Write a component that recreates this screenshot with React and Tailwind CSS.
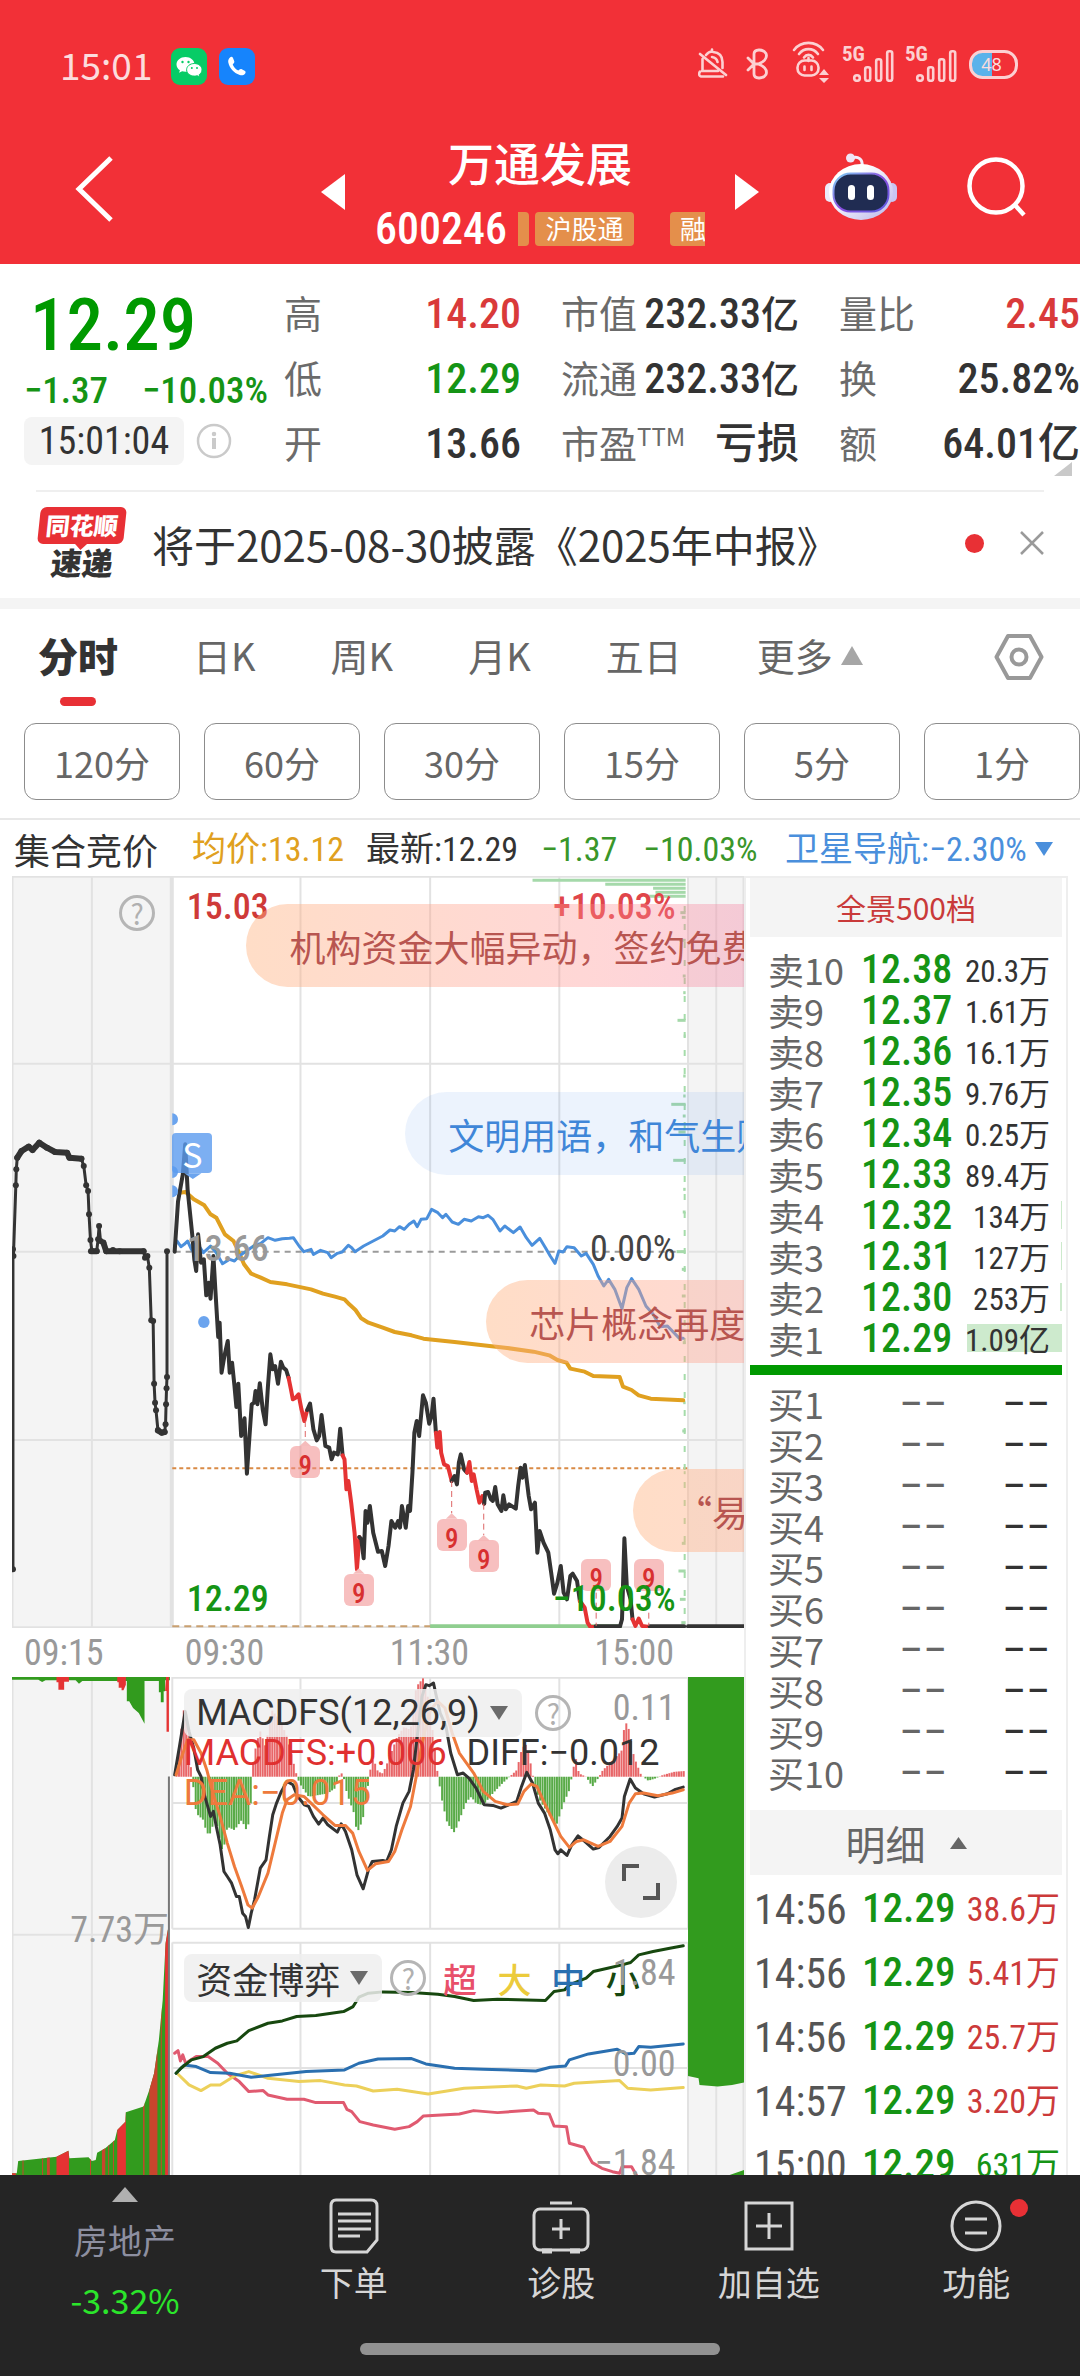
import React from 'react';

const NUM = "font-['Roboto_Condensed','Roboto','Noto_Sans_CJK_SC',sans-serif]";

/* ---------- chart data ---------- */

const priceSegments = [
  ['k', '365,37 372,-113 382,-195 387,-285 392,-150 397,-80 402,-10 406,60 410,95 414,-15 420,70 426,60 431,168 436,130 440,178 446,50 450,150 456,293 459,250 463,400 469,350 476,305 480,400 485,370 490,440 494,503 498,433 504,590 511,537 516,703 526,495 531,490 534,455 538,495 543,432 549,510 555,555 560,440 565,345 570,390 575,380 581,433 587,367 592,385 598,392 603,415'],
  ['r', '603,415 608,450 612,480 618,475 624,465 630,510 636,545 642,512'],
  ['k', '642,512 648,493 655,570 662,603 667,590 672,527 680,620 688,625 693,660 698,640 706,645 711,568 716,648'],
  ['r', '716,648 720,660 724,750 728,725 734,790 741,880 746,990 751,893'],
  ['k', '751,893 755,900 760,957 764,815 768,850 773,800 780,880 790,937 798,935 805,980 812,920 818,845 826,865 832,845 836,865 840,800 848,865 853,800 857,815 862,700 866,580 871,545 876,590 884,468 890,490 897,553 902,530 906,478 911,580'],
  ['r', '911,580 914,625 919,578 922,640 928,675 936,680 944,725'],
  ['k', '944,725 950,710 955,735 959,670 963,645 970,690 976,700'],
  ['r', '976,700 981,668 986,725 990,705 996,750 1002,790 1008,770 1012,793'],
  ['k', '1012,793 1014,760 1020,758 1026,780 1030,785 1035,743 1040,795 1048,815 1052,768 1057,810 1064,795 1078,808 1083,740 1088,685 1092,715 1097,677 1105,770 1110,810 1118,790 1123,940 1128,875 1136,910 1146,940 1152,1000 1158,1063 1165,1030 1172,980 1178,1060 1185,1080 1192,1010 1197,1003 1206,1025 1212,1085'],
  ['r', '1212,1085 1222,1105 1228,1150 1234,1163 1245,1163'],
  ['k', '1245,1161 1296,1161 1300,1140 1305,897 1310,1040 1318,1080 1322,1140'],
  ['r', '1322,1140 1328,1160 1335,1138 1342,1160 1358,1163'],
  ['k', '1358,1161 1430,1161'],
  ['k', '1438,1161 1555,1161'],
];

const averageLine =
  '375,-140 388,-142 405,-120 427,-102 440,-75 452,-65 470,-15 488,5 498,35 510,75 525,103 545,115 565,128 600,135 650,150 675,163 700,172 720,180 730,195 743,212 755,237 770,250 800,265 825,278 860,288 885,298 950,308 1000,316 1060,326 1115,337 1148,348 1165,362 1184,370 1192,388 1222,397 1240,410 1295,413 1302,442 1320,452 1335,468 1360,478 1428,483';

const sectorLine =
  '365,20 370,5 378,22 385,15 392,5 400,30 410,50 418,25 425,40 440,20 452,40 465,73 480,60 490,65 500,50 515,35 530,20 545,12 560,-5 575,3 590,-2 605,-3 613,-5 625,20 635,37 650,30 655,45 670,33 685,40 692,55 705,42 715,38 728,18 735,25 742,37 760,20 780,5 800,-10 815,-28 825,-25 835,-38 845,-30 855,-45 865,-55 872,-38 880,-60 892,-62 902,-90 915,-80 925,-65 932,-75 945,-52 958,-45 970,-60 985,-55 1000,-68 1010,-65 1020,-72 1030,-60 1045,-25 1055,-40 1073,-20 1087,-37 1100,-5 1112,18 1128,-3 1140,25 1150,50 1160,72 1168,35 1177,38 1185,22 1200,25 1215,50 1225,42 1240,75 1250,110 1262,140 1272,120 1285,150 1300,208 1310,145 1320,118 1335,150 1350,200 1365,225 1380,262 1395,260 1420,297 1428,297';

const auctionLine =
  '27,990 27,30 28,50 33,-162 34,-210 36,-245 45,-265 60,-278 68,-268 82,-290 98,-275 115,-262 140,-260 145,-245 170,-242 175,-220 180,-162 184,-145 186,-75 189,2 192,35 202,35 205,0 207,-40 210,5 216,10 222,36 236,32 250,36 300,36 303,55 308,50 312,85 316,243 320,245 322,433 324,490 326,513 330,572 338,580 344,578 346,555 347,495 348,447 349,413 349,36';
const auctionThick = [
  '36,-245 45,-265 60,-278 68,-268 82,-290 98,-275 115,-262 140,-260 145,-245 170,-242',
  '190,36 202,36',
  '216,10 222,36 300,36',
  '330,574 338,580 344,578',
];

const orderBars = [
  [1113, -1077], [1265, -1065], [1365, -1053], [1370, -1041], [1350, -1029], [1422, -980], [1425, -966], [1420, -897],
  [1427, -790], [1428, -740], [1416, -657], [1429, -610], [1428, -490], [1428, -430], [1403, -405], [1427, -370],
  [1418, -322], [1407, -237], [1428, -150], [1427, -82], [1414, 37], [1425, 90], [1425, 170], [1427, 310], [1428, 490],
  [1426, 575], [1429, 700], [1425, 912], [1418, 995], [1421, 1080], [1424, 1150],
];

const histogram = [
  [368, 20], [375, 100], [385, 210], [392, 170], [398, 40], [402, -5], [410, -110], [425, -130], [432, -170], [440, -170],
  [450, -120], [460, -190], [466, -230], [475, -150], [490, -160], [505, -130], [515, -160], [522, -130], [527, -5],
  [530, 60], [543, 140], [555, 90], [568, 200], [585, 170], [600, 120], [612, 50], [620, 5], [626, -20], [645, -60],
  [665, -55], [685, -50], [700, -35], [708, 0], [712, 15], [718, 0], [725, -50], [740, -110], [746, -170], [758, -130],
  [768, -40], [772, 10], [780, 55], [790, 15], [800, 10], [812, 50], [830, 120], [845, 150], [858, 140], [870, 270],
  [884, 295], [893, 250], [905, 130], [915, 5], [925, -80], [935, -140], [950, -168], [960, -130], [975, -75], [985, -60],
  [995, -80], [1010, -85], [1030, -50], [1050, -20], [1065, 0], [1080, 20], [1090, 80], [1098, 100], [1105, 70],
  [1113, 10], [1120, -40], [1130, -75], [1150, -120], [1163, -145], [1178, -80], [1190, -40], [1195, 0], [1203, 60],
  [1210, 10], [1225, 0], [1238, -30], [1250, -5], [1260, 20], [1285, 55], [1300, 80], [1306, 170], [1315, 140],
  [1325, 60], [1340, 5], [1355, -12], [1370, -5], [1385, 5], [1410, 15], [1430, 17],
];

function histogramBars() {
  const bars = [];
  let i = 0;
  for (let x = 369; x < 1430; x += 5) {
    while (histogram[i + 1][0] < x) i += 1;
    const [x0, v0] = histogram[i];
    const [x1, v1] = histogram[i + 1];
    bars.push([x, v0 + ((v1 - v0) * (x - x0)) / (x1 - x0)]);
  }
  return bars;
}

const diffLine =
  '365,345 375,260 387,155 395,215 405,265 413,330 420,350 428,410 440,470 446,455 452,500 460,555 468,635 475,650 484,670 494,710 500,710 507,760 513,770 519,803 525,760 532,720 544,625 556,600 563,530 570,465 578,430 588,395 600,365 612,375 622,410 636,435 645,440 655,470 666,493 675,475 685,495 705,517 713,492 722,515 735,570 746,645 759,687 770,630 778,605 800,602 808,605 818,570 828,500 842,430 855,395 864,330 872,230 882,110 890,75 897,78 906,70 912,110 920,160 932,200 942,280 956,345 968,340 980,355 995,385 1012,435 1030,437 1047,445 1080,425 1090,380 1101,338 1113,370 1125,430 1138,460 1150,510 1160,570 1166,582 1172,570 1185,587 1195,555 1208,528 1222,545 1240,568 1252,563 1275,530 1290,500 1300,475 1305,410 1317,358 1328,385 1345,402 1368,412 1395,402 1410,390 1428,382';
const deaLine =
  '368,345 380,290 392,240 405,240 420,280 432,330 445,400 460,470 475,550 490,620 505,680 518,735 527,745 540,710 560,640 575,550 590,460 600,420 615,405 635,410 650,430 675,465 700,497 722,497 737,520 750,575 768,632 785,612 812,605 825,575 840,510 858,440 870,350 885,230 900,150 915,125 930,145 945,220 960,280 990,340 1010,395 1035,425 1060,435 1082,433 1095,395 1110,373 1122,380 1138,430 1155,480 1172,530 1190,563 1205,545 1220,540 1250,560 1275,545 1300,500 1315,430 1328,402 1345,400 1375,408 1405,400 1428,390';

const fundLines = [
  ['#e05a70', '365,1180 372,1172 377,1203 382,1185 388,1210 410,1190 435,1190 455,1210 475,1240 500,1265 520,1295 550,1292 560,1305 600,1318 635,1318 660,1328 718,1328 725,1348 735,1355 752,1385 780,1395 825,1408 855,1400 872,1385 885,1368 960,1362 990,1352 1040,1358 1115,1350 1125,1360 1148,1362 1158,1398 1184,1400 1190,1450 1220,1462 1238,1508 1258,1525 1280,1535 1295,1540 1300,1520 1320,1520 1330,1545'],
  ['#ecd05a', '370,1240 395,1275 420,1292 440,1275 460,1275 490,1248 520,1235 560,1255 625,1265 670,1262 720,1275 745,1278 780,1293 830,1288 895,1302 970,1285 1080,1278 1100,1285 1130,1275 1180,1278 1200,1270 1295,1262 1312,1285 1360,1290 1428,1283'],
  ['#2a6fb0', '368,1240 385,1215 410,1220 440,1238 480,1240 525,1252 560,1247 640,1235 720,1230 750,1210 790,1197 860,1196 890,1212 950,1225 1010,1228 1120,1233 1150,1222 1182,1218 1190,1200 1230,1182 1290,1168 1308,1182 1325,1180 1335,1160 1360,1162 1428,1152'],
  ['#17480f', '368,1240 378,1225 400,1200 425,1190 450,1165 475,1150 495,1143 520,1112 560,1090 590,1083 620,1070 660,1067 718,1055 738,1040 750,1012 770,1000 800,996 860,998 915,1003 950,1010 990,1022 1040,1018 1140,1022 1158,995 1180,990 1190,975 1225,955 1240,935 1270,925 1300,915 1318,908 1335,885 1365,875 1400,865 1428,858'],
];

const sells = [
  ['10', '12.38', '20.3万', 'w-0'],
  ['9', '12.37', '1.61万', 'w-0'],
  ['8', '12.36', '16.1万', 'w-0'],
  ['7', '12.35', '9.76万', 'w-0'],
  ['6', '12.34', '0.25万', 'w-0'],
  ['5', '12.33', '89.4万', 'w-0'],
  ['4', '12.32', '134万', 'w-px'],
  ['3', '12.31', '127万', 'w-px'],
  ['2', '12.30', '253万', 'w-0.5'],
  ['1', '12.29', '1.09亿', 'w-[95px]'],
];
const buys = ['1', '2', '3', '4', '5', '6', '7', '8', '9', '10'];
const trades = [
  ['14:56', '38.6万', 'text-[#cc3a3a]'],
  ['14:56', '5.41万', 'text-[#cc3a3a]'],
  ['14:56', '25.7万', 'text-[#cc3a3a]'],
  ['14:57', '3.20万', 'text-[#cc3a3a]'],
  ['15:00', '631万', 'text-[#159415]'],
];

/* ---------- helpers ---------- */

const TOP = { x: 25, y: -1090, w: 1530, h: 2256 };
const LOW = { x: 25, y: 52, w: 1530, h: 1493 };

function Place({ box, x, y, right, className = '', children }) {
  const style = { top: `${((y - box.y) / box.h) * 100}%` };
  if (right) style.right = `${((box.x + box.w - x) / box.w) * 100}%`;
  else style.left = `${((x - box.x) / box.w) * 100}%`;
  return (
    <div className={`absolute whitespace-nowrap ${className}`} style={style}>
      {children}
    </div>
  );
}

function Line({ points, color, width = 3 }) {
  return (
    <polyline
      points={points}
      fill="none"
      stroke={color}
      strokeWidth={width}
      strokeLinejoin="round"
      strokeLinecap="round"
      vectorEffect="non-scaling-stroke"
    />
  );
}

function Rule({ d, color = '#e2e2e2', width = 2, dash }) {
  return <path d={d} fill="none" stroke={color} strokeWidth={width} strokeDasharray={dash} vectorEffect="non-scaling-stroke" />;
}

function Help({ label }) {
  return (
    <button aria-label={label} className="flex size-9 items-center justify-center rounded-full border-[3px] border-[#b5b5b5] text-[28px] leading-none text-[#b0b0b0]">
      ?
    </button>
  );
}

function Triangle({ className, down }) {
  return (
    <svg viewBox="0 0 20 16" className={className} preserveAspectRatio="none" aria-hidden="true">
      <path d={down ? 'M0 0H20L10 16Z' : 'M10 0L20 16H0Z'} fill="currentColor" />
    </svg>
  );
}

/* ---------- header ---------- */

function Signal() {
  return (
    <div className="relative h-9 w-[52px]">
      <span className={`${NUM} absolute -top-0.5 left-0 text-[21px] leading-[21px] font-bold text-[#fcd0d2]`}>5G</span>
      <svg viewBox="0 0 52 36" className="h-9 w-[52px]" aria-hidden="true">
        <g fill="none" stroke="#fcd0d2" strokeWidth="2.6">
          <circle cx="15" cy="32" r="2.8" />
          <rect x="23.2" y="21.2" width="5" height="13.6" rx="2" />
          <rect x="34.2" y="13.2" width="5" height="21.6" rx="2" />
          <rect x="45.2" y="5.2" width="5" height="29.6" rx="2" />
        </g>
      </svg>
    </div>
  );
}

function StatusBar() {
  return (
    <div className="flex h-[128px] items-center pr-[62px] pl-15 text-[#fcdcdd]">
      <span className="pt-0.5 text-[37px]">15:01</span>
      <svg viewBox="0 0 36 37" className="mt-1 ml-[19px] h-[37px] w-9" role="img" aria-label="微信">
        <rect width="36" height="37" rx="9" fill="#07cc66" />
        <path d="M14.500 9C9.500 9 5.500 12.300 5.500 16.400c0 2.400 1.300 4.400 3.400 5.800l-.8 2.600 3-1.500c1 .3 2.200.5 3.400.5 5 0 9-3.300 9-7.400S19.500 9 14.500 9Z" fill="#fff" />
        <path d="M23.300 15.500c4.300 0 7.700 2.800 7.700 6.300 0 2-1.100 3.700-2.800 4.900l.6 2.300-2.500-1.300c-1 .3-2 .4-3 .4-4.300 0-7.700-2.800-7.700-6.300s3.400-6.300 7.700-6.300Z" fill="#fff" stroke="#07cc66" />
        <g fill="#07cc66"><circle cx="11.500" cy="14" r="1.200" /><circle cx="17.500" cy="14" r="1.200" /><circle cx="20.800" cy="20" r="1" /><circle cx="26" cy="20" r="1" /></g>
      </svg>
      <svg viewBox="0 0 36 37" className="mt-1 ml-3 h-[37px] w-9" role="img" aria-label="电话">
        <rect width="36" height="37" rx="9" fill="#1684fc" />
        <path d="M11 9.500c1-1 2.500-.8 3 .5l1.200 3c.3.900.1 1.600-.5 2.300l-1 1.100c1 2.600 2.900 4.700 5.600 6l1.200-.9c.7-.6 1.500-.7 2.300-.3l2.800 1.500c1.200.6 1.300 2 .4 3-1.300 1.500-3.200 2-5.200 1.300C14.500 25 10.500 20 9.300 14.500c-.4-2 .3-3.700 1.700-5Z" fill="#fff" />
      </svg>
      <div className="ml-auto flex items-center">
        <svg viewBox="0 0 30 32" className="h-8 w-[30px]" fill="none" stroke="#fcd0d2" strokeWidth="2.600" strokeLinecap="round" strokeLinejoin="round" aria-hidden="true">
          <path d="M2 6L28 27M8 7c2-2.500 4-3.500 6-3.500V1.500M15 4c6 .5 9.500 4 9.500 10v6M4.500 11v11M4 23h16M2 23.500C.5 26 1 28 3 28.500h22M14 9c3 .4 5 2 5.500 5" />
        </svg>
        <svg viewBox="0 0 22 32" className="ml-[18px] h-8 w-[22px]" fill="none" stroke="#fcd0d2" strokeWidth="2.800" strokeLinecap="round" strokeLinejoin="round" aria-hidden="true">
          <path d="M2 10L8 16L2 22M8 16V6c0-5 9-5.500 12-.5c2 5-3 9-8 10.500H8M8 16v10c0 5 9 5.500 12 .5c2-5-3-9-8-10.500" />
        </svg>
        <svg viewBox="0 0 38 42" className="mr-3 mb-1 ml-6 h-[42px] w-[38px]" fill="none" stroke="#fcd0d2" strokeWidth="2.600" strokeLinecap="round" aria-hidden="true">
          <path d="M2 9C9-.5 24-.5 31 9M7 13c5-6.500 14-6.500 19 0M12 16.500c2.500-3.500 6.500-3.500 9 0M16.500 17v3" />
          <rect x="5.500" y="19.500" width="21" height="15" rx="7" />
          <path d="M12.500 25.500v3.500M19.500 25.500v3.500" />
          <path d="M32 28l5 6H27ZM27 37h10l-5 5Z" fill="#fcd0d2" stroke="none" />
        </svg>
        <Signal />
        <span className="w-[11px]" />
        <Signal />
        <div className="relative ml-3 h-[29px] w-[49px]">
          <svg viewBox="0 0 49 29" className="h-[29px] w-[49px]" aria-hidden="true">
            <path d="M14.500 1.500H23v26h-8.500a13 13 0 0 1 0-26Z" fill="#5bb2ea" />
            <rect x="1.500" y="1.500" width="46" height="26" rx="12" fill="none" stroke="#fcd0d2" strokeWidth="3" />
          </svg>
          <span className="absolute inset-x-0 top-0 pr-1 text-center font-['Noto_Sans',sans-serif] text-[18px] leading-[29px]">48</span>
        </div>
      </div>
    </div>
  );
}

function Header() {
  return (
    <header className="bg-[#f23037] text-white">
      <StatusBar />
      <div className="grid h-[136px] grid-cols-[1fr_438px_1fr] items-center">
        <button aria-label="返回" className="ml-[74px] w-10 pb-3.5">
          <svg viewBox="0 0 40 66" className="h-[66px] w-10" fill="none" stroke="#fff" strokeWidth="5">
            <path d="M37 2L5 33L37 64" />
          </svg>
        </button>
        <div className="flex items-center justify-between">
          <button aria-label="上一只" className="pb-2">
            <svg viewBox="0 0 24 36" className="h-9 w-6"><path d="M24 0V36L0 18Z" fill="#fff" /></svg>
          </button>
          <div className="w-[330px]">
            <h1 className="text-center text-[46px] leading-[66px] font-medium">万通发展</h1>
            <div className="flex h-[70px] items-center overflow-hidden">
              <span className={`${NUM} w-[143px] shrink-0 text-[44px] font-medium`}>600246</span>
              <span className="h-[34px] w-[11px] shrink-0 rounded-r bg-[#e48f4b]" />
              <span className="ml-1.5 h-[34px] w-[99px] shrink-0 rounded bg-[#e48f4b] text-center text-[26px] leading-[32px]">沪股通</span>
              <span className="ml-9 h-[34px] w-[60px] shrink-0 rounded bg-[#e48f4b] pl-2.5 text-[26px] leading-[32px]">融</span>
            </div>
          </div>
          <button aria-label="下一只" className="pb-2">
            <svg viewBox="0 0 24 36" className="h-9 w-6"><path d="M0 0V36L24 18Z" fill="#fff" /></svg>
          </button>
        </div>
        <div className="flex items-center justify-between pr-[52px] pb-4.5 pl-[65px]">
          <button aria-label="智能助手">
            <svg viewBox="0 0 74 68" className="h-[68px] w-[74px]">
              <defs>
                <linearGradient id="shell" x1="0" y1="0" x2="1" y2="1"><stop offset="0.3" stopColor="#ffffff" /><stop offset="1" stopColor="#b9b4ea" /></linearGradient>
                <linearGradient id="rim" x1="0" y1="0" x2="1" y2="1"><stop offset="0" stopColor="#7fd6f5" /><stop offset="0.5" stopColor="#8b4fe0" /><stop offset="1" stopColor="#5a5be0" /></linearGradient>
              </defs>
              <path d="M28 5c6-2 11 1 10 8" fill="none" stroke="#f3eefc" strokeWidth="3" />
              <circle cx="26.500" cy="5" r="4.500" fill="#efe6f6" />
              <rect x="1" y="30" width="10" height="19" rx="5" fill="#eceafa" />
              <rect x="63" y="30" width="10" height="19" rx="5" fill="#c9c6f2" />
              <ellipse cx="37" cy="39" rx="32" ry="28" fill="url(#shell)" />
              <rect x="9.500" y="20.500" width="55" height="38" rx="17" fill="#202c52" stroke="url(#rim)" strokeWidth="2" />
              <rect x="24" y="32" width="7" height="15" rx="3.500" fill="#fff" />
              <rect x="43" y="32" width="7" height="15" rx="3.500" fill="#fff" />
            </svg>
          </button>
          <button aria-label="搜索">
            <svg viewBox="0 0 62 62" className="size-[62px]" fill="none" stroke="#fff" strokeWidth="4.500">
              <circle cx="30" cy="30" r="26.500" /><path d="M48 48L58 59" />
            </svg>
          </button>
        </div>
      </div>
    </header>
  );
}

/* ---------- quote ---------- */

function Stat({ label, value, unit, color = 'text-[#333]' }) {
  return (
    <div className="flex h-[65px] items-center justify-between">
      <span className="pb-1 text-[38px] text-[#6b6b6b]">{label}</span>
      <span className={`${NUM} text-[42px] font-medium ${color}`}>
        {value}
        {unit && <span className="text-[38px]">{unit}</span>}
      </span>
    </div>
  );
}

function Quote() {
  return (
    <section className="relative flex pt-[17px] pb-3.5">
      <div className="w-[284px] shrink-0 pl-6">
        <div className={`${NUM} pl-1.5 text-[73px] leading-[88px] font-medium text-[#009900]`}>12.29</div>
        <div className={`${NUM} flex h-11 items-center justify-between pr-4 text-[37px] font-medium text-[#159415]`}>
          <span>−1.37</span>
          <span>−10.03%</span>
        </div>
        <div className="mt-1 flex items-center gap-3">
          <span className={`${NUM} h-12 w-40 rounded-lg bg-[#f4f4f4] text-center text-[38px] leading-[48px] text-[#333]`}>15:01:04</span>
          <button aria-label="说明">
            <svg viewBox="0 0 36 36" className="size-9" fill="none" stroke="#cacaca" strokeWidth="2.500">
              <circle cx="18" cy="18" r="16" /><path d="M18 15v11" strokeWidth="4" /><circle cx="18" cy="11" r="1" />
            </svg>
          </button>
        </div>
      </div>
      <div className="grid flex-1 grid-cols-[237fr_238fr_241fr] gap-x-10">
        <div>
          <Stat label="高" value="14.20" color="text-[#d93a3a]" />
          <Stat label="低" value="12.29" color="text-[#159415]" />
          <Stat label="开" value="13.66" />
        </div>
        <div>
          <Stat label="市值" value="232.33" unit="亿" />
          <Stat label="流通" value="232.33" unit="亿" />
          <Stat label={<>市盈<sup className="text-[24px]">TTM</sup></>} value="亏损" />
        </div>
        <div>
          <Stat label="量比" value="2.45" color="text-[#d93a3a]" />
          <Stat label="换" value="25.82%" />
          <Stat label="额" value="64.01亿" />
        </div>
      </div>
      <svg viewBox="0 0 18 14" className="absolute right-2 bottom-3.5 h-3.5 w-[18px]" aria-hidden="true"><path d="M18 0V14H0Z" fill="#c9c9c9" /></svg>
    </section>
  );
}

function News() {
  return (
    <section>
      <div className="mx-9 border-t-2 border-[#efefef]" />
      <div className="flex h-[106px] items-center pr-9 pb-1 pl-9">
        <div className="flex w-[92px] shrink-0 flex-col items-center">
          <span className="relative h-[37px] w-[86px] -skew-x-6 rounded-md bg-[#e83035] text-center text-[24px] leading-[36px] font-black text-white">
            同花顺
            <svg viewBox="0 0 16 8" className="absolute -bottom-1.5 left-9 h-2 w-4" aria-hidden="true"><path d="M0 0H16L8 8Z" fill="#e83035" /></svg>
          </span>
          <span className="-skew-x-6 text-[31px] leading-[36px] font-black text-[#333]">速递</span>
        </div>
        <a href="#news" className="ml-6 text-[42px] whitespace-nowrap text-[#333]">将于2025-08-30披露《2025年中报》</a>
        <span className="ml-auto size-[19px] rounded-full bg-[#e83035]" />
        <button aria-label="关闭" className="ml-9">
          <svg viewBox="0 0 24 24" className="size-6" stroke="#9a9a9a" strokeWidth="2.500"><path d="M1 1L23 23M23 1L1 23" /></svg>
        </button>
      </div>
      <div className="h-[11px] bg-[#f4f4f4]" />
    </section>
  );
}

function Tabs() {
  return (
    <section className="border-b-2 border-[#e8e8e8] pb-[18px]">
      <div className="flex h-[114px] items-start gap-[75px] pt-[18px] pr-9 pl-[38px] text-[38px] leading-[56px] text-[#666]">
        <button className="flex flex-col items-center text-[40px] font-black text-[#333]">
          分时
          <span className="mt-3.5 h-[9px] w-9 rounded-full bg-[#e83035]" />
        </button>
        <button>日K</button>
        <button>周K</button>
        <button>月K</button>
        <button>五日</button>
        <button className="flex items-center gap-2">
          更多
          <Triangle className="h-[19px] w-[22px] text-[#a6a6a6]" />
        </button>
        <button aria-label="设置" className="ml-auto self-start pt-1.5">
          <svg viewBox="0 0 50 48" className="h-12 w-[50px]" fill="none" stroke="#999" strokeWidth="4" strokeLinejoin="round">
            <path d="M14 3H36L47.500 24L36 45H14L2.500 24Z" /><circle cx="25" cy="24" r="7.500" />
          </svg>
        </button>
      </div>
      <div className="flex gap-6 pl-6">
        {['120分', '60分', '30分', '15分', '5分', '1分'].map((t) => (
          <button key={t} className="h-[77px] flex-1 rounded-xl border border-[#8c8c8c] text-[36px] text-[#666]">{t}</button>
        ))}
      </div>
    </section>
  );
}

function Legend() {
  return (
    <div className="flex h-14 items-center pt-0.5 pl-3.5 text-[34px] whitespace-nowrap">
      <span className="w-[178px] text-[36px] text-[#333]">集合竞价</span>
      <span className={`${NUM} w-[174px] text-[#e0a020]`}>均价:13.12</span>
      <span className={`${NUM} w-[175px] text-[#333]`}>最新:12.29</span>
      <span className={`${NUM} w-[102px] text-[#3a962a]`}>−1.37</span>
      <span className={`${NUM} w-[142px] text-[#3a962a]`}>−10.03%</span>
      <button className={`${NUM} flex items-center gap-2 text-[#4a8fdc]`}>
        卫星导航:−2.30%
        <Triangle down className="h-3.5 w-[18px]" />
      </button>
    </div>
  );
}

/* ---------- price chart ---------- */

function Flag({ x, y }) {
  return (
    <Place box={TOP} x={x} y={y} className={`${NUM} -ml-[15px] h-8 w-[30px] rounded-md bg-[#f08a8a]/55 text-center text-[27px] leading-[40px] font-medium text-[#d83030]`}>
      9
    </Place>
  );
}

function Bubble({ x, y, tone, children }) {
  return (
    <Place
      box={TOP}
      x={x}
      y={y}
      className={`h-[83px] rounded-l-full pl-[43px] text-[36px] leading-[84px] ${tone}`}
    >
      {children}
    </Place>
  );
}

const warm = 'w-[700px] bg-linear-to-r from-[#ffb482]/45 via-[#ff8c8c]/35 to-[#e664b4]/35 text-[#b85550]';

function PriceChart() {
  return (
    <div className="relative h-[752px] overflow-hidden">
      <svg viewBox="25 -1090 1530 2256" preserveAspectRatio="none" className="absolute inset-0 size-full" role="img" aria-label="分时走势">
        <rect x="25" y="-1090" width="333" height="2256" fill="#f4f4f4" />
        <rect x="1438" y="-1090" width="117" height="2256" fill="#f4f4f4" />
        <Rule d="M25 -1088H1555M25 -527H1555M25 37H360M1438 37H1555M25 602H1555M25 1164H1555" />
        <Rule d="M26 -1090V1166M192 -1090V1166M628 -1090V1166M899 -1090V1166M1169 -1090V1166M1438 -1090V1166M1497 -1090V1166M1554 -1090V1166" />
        <Rule d="M359 -1090V1166" width={4} />
        <Rule d="M365 37H1430" color="#9a9a9a" dash="6 5" />
        <Rule d="M360 687H1438" color="#d98a45" width={2} dash="4 3" />
        <Rule d="M360 1161H1250" color="#c9a070" width={2} dash="7 5" />
        <Rule d="M899 1161H1300" color="#8fce8f" width={4} />
        <Rule d="M1431 -1000V1160" color="#a5dcaa" width={2} dash="6 12" />
        {orderBars.map(([x, y]) => (
          <Rule key={y} d={`M${x} ${y}H1433`} color="#a5d9aa" width={3} />
        ))}
        <Line points={auctionLine} color="#333" width={3} />
        {auctionThick.map((p) => <Line key={p} points={p} color="#333" width={6} />)}
        {auctionLine.split(' ').map((p, i) => <Line key={i} points={`${p} ${p}`} color="#333" width={6} />)}
        <Line points={averageLine} color="#e0a020" width={4} />
        <Line points={sectorLine} color="#4a8fdc" width={3} />
        {priceSegments.map(([tone, p]) => (
          <Line key={p} points={p} color={tone === 'k' ? '#333333' : '#e53333'} width={4} />
        ))}
        <Rule d="M638 545V605M944 725V822M1011 793V887M1246 1060V1160M1356 1060V1160" color="#d66" width={1} dash="6 4" />
        <g fill="#f5bcbc">
          <path d="M626 620L638 604L650 620ZM738 1003L750 987L762 1003ZM932 838L944 822L956 838ZM999 903L1011 887L1023 903Z" />
        </g>
        <g fill="#6ba4ee">
          <path d="M360 -378a12 18 0 0 1 0 36ZM360 -220a12 18 0 0 1 0 36ZM360 -162a12 18 0 0 1 0 36Z" />
          <ellipse cx="426" cy="248" rx="12" ry="18" />
          <path d="M385 -198L403 -181L421 -198Z" />
        </g>
      </svg>
      <Place box={TOP} x={360} y={-319} className="size-10 rounded-sm bg-[#5b9bef]/80 text-center text-[34px] leading-[42px] text-white">S</Place>
      <Flag x={638} y={620} />
      <Flag x={750} y={1003} />
      <Flag x={944} y={838} />
      <Flag x={1011} y={903} />
      <Flag x={1246} y={960} />
      <Flag x={1356} y={960} />
      <div className={`${NUM} text-[36px] leading-10 font-medium`}>
        <Place box={TOP} x={390} y={-1056} className="text-[#cf3a38]">15.03</Place>
        <Place box={TOP} x={1412} y={-1056} right className="text-[#e0454a]">+10.03%</Place>
        <Place box={TOP} x={390} y={-32} className="text-[#999]">13.66</Place>
        <Place box={TOP} x={1412} y={-32} right className="font-normal text-[#444]">0.00%</Place>
        <Place box={TOP} x={390} y={1019} className="text-[#159415]">12.29</Place>
        <Place box={TOP} x={1412} y={1019} right className="text-[#159415]">−10.03%</Place>
      </div>
      <Place box={TOP} x={249} y={-1032}><Help label="集合竞价说明" /></Place>
      <Bubble x={515} y={-1005} tone={warm}>机构资金大幅异动，签约免费</Bubble>
      <Bubble x={847} y={-441} tone="w-[500px] bg-[#468cf0]/10 text-[#3f86d8]">文明用语，和气生财</Bubble>
      <Bubble x={1016} y={123} tone={warm}>芯片概念再度</Bubble>
      <Bubble x={1323} y={688} tone={warm}>“易中</Bubble>
    </div>
  );
}

/* ---------- indicator charts ---------- */

const auctionVolume =
  'M25 1545V1540H35L38 1503L90 1495L118 1490L143 1472L145 1495L185 1492L192 1503L200 1500L203 1478L220 1465L240 1440L245 1410L262 1385L263 1357L300 1340L312 1290L322 1240L332 1140L340 1020L346 850L352 800V1545Z';

function IndicatorCharts() {
  return (
    <div className="relative h-[498px] overflow-hidden">
      <svg viewBox="25 52 1530 1493" preserveAspectRatio="none" className="absolute inset-0 size-full" role="img" aria-label="指标">
        <defs><clipPath id="vol"><path d={auctionVolume} /></clipPath></defs>
        <rect x="25" y="52" width="330" height="1493" fill="#f4f4f4" />
        <rect x="1438" y="52" width="117" height="1493" fill="#f4f4f4" />
        <Rule d="M26 52V1545M192 52V1545M25 825H355M1497 52V1545M1554 52V1545" />
        <Rule d="M360 54H1438M360 430H1438M360 807H1438M360 849H1438M360 1224H1438" />
        <Rule d="M360 52V807M628 52V807M899 52V807M1169 52V807M1438 52V807M360 848V1545M628 848V1545M899 848V1545M1169 848V1545M1438 848V1545" />
        <path d={auctionVolume} fill="#329b1e" />
        <g clipPath="url(#vol)" fill="#e53333">
          <rect x="25" y="1500" width="8" height="60" />
          <rect x="118" y="700" width="26" height="860" />
          <rect x="245" y="700" width="18" height="860" />
          <rect x="345" y="700" width="8" height="860" />
          <g fill="#c8452d">
            <rect x="47" y="700" width="2" height="860" /><rect x="88" y="700" width="2" height="860" /><rect x="98" y="700" width="6" height="860" />
            <rect x="188" y="700" width="2" height="860" /><rect x="213" y="700" width="7" height="860" /><rect x="226" y="700" width="2" height="860" />
            <rect x="236" y="700" width="2" height="860" /><rect x="299" y="700" width="3" height="860" /><rect x="312" y="700" width="17" height="860" />
            <rect x="336" y="700" width="2" height="860" />
          </g>
        </g>
        <path d="M25 52H355V62H345V95H342V128H336V98H332V64H302V192L290 160L278 145L270 125H265V64H172L165 72L158 62H95L88 67L80 60H25Z" fill="#329b1e" />
        <path d="M118 52H144V66H134V90H122V68H118ZM245 52H263V75L258 92H254V84H248V68H245ZM347 52H353V216H348V94H345Z" fill="#e53333" />
        <Rule d="M353 350V1545" color="#777" />
        <path d="M1438 50H1555V1268L1530 1275L1500 1280L1462 1275L1460 1255L1438 1248ZM1525 1545L1555 1530V1545Z" fill="#329b1e" />
        {histogramBars().map(([x, v]) => (
          <Rule key={x} d={`M${x} 351V${351 - v}`} color={v > 0 ? '#e86668' : '#58aa47'} width={2} />
        ))}
        <Line points={diffLine} color="#333" width={3} />
        <Line points={deaLine} color="#ee7a3c" width={3} />
        {fundLines.map(([c, p]) => <Line key={c} points={p} color={c} width={3} />)}
      </svg>

      <Place box={LOW} x={385} y={87}>
        <button className="flex h-12 items-center gap-2.5 rounded-lg bg-[#efefef]/85 pr-3.5 pl-3 font-['Roboto',sans-serif] text-[36px] text-[#333]">
          MACDFS(12,26,9)
          <Triangle down className="h-3.5 w-[18px] text-[#6b6b6b]" />
        </button>
      </Place>
      <Place box={LOW} x={1119} y={106}><Help label="MACDFS 说明" /></Place>
      <div className="font-['Roboto',sans-serif] text-[36px] leading-10">
        <Place box={LOW} x={384} y={221} className="text-[#e03030]">MACDFS:+0.006</Place>
        <Place box={LOW} x={975} y={221} className="text-[#333]">DIFF:−0.012</Place>
        <Place box={LOW} x={384} y={340} className="text-[#ee7a3c]">DEA:−0.015</Place>
      </div>
      <Place box={LOW} x={385} y={882}>
        <button className="flex h-12 items-center gap-2.5 rounded-lg bg-[#efefef]/85 pr-3.5 pl-3 text-[36px] text-[#333]">
          资金博弈
          <Triangle down className="h-3.5 w-[18px] text-[#6b6b6b]" />
        </button>
      </Place>
      <Place box={LOW} x={816} y={900}><Help label="资金博弈说明" /></Place>
      <div className="text-[34px] leading-10 font-medium">
        <Place box={LOW} x={926} y={896} className="text-[#e8506a]">超</Place>
        <Place box={LOW} x={1040} y={896} className="text-[#eccb3c]">大</Place>
        <Place box={LOW} x={1152} y={896} className="text-[#2a6fb0]">中</Place>
        <Place box={LOW} x={1266} y={896} className="text-[#17480f]">小</Place>
      </div>
      <div className={`${NUM} text-[36px] leading-10 text-[#999]`}>
        <Place box={LOW} x={1412} y={84} right>0.11</Place>
        <Place box={LOW} x={1412} y={880} right>1.84</Place>
        <Place box={LOW} x={1412} y={1152} right>0.00</Place>
        <Place box={LOW} x={1412} y={1450} right>−1.84</Place>
        <Place box={LOW} x={353} y={750} right>7.73万</Place>
      </div>
      <Place box={LOW} x={1265} y={560}>
        <button aria-label="全屏" className="block size-18 rounded-full bg-[#ebebeb]/95">
          <svg viewBox="0 0 72 72" className="size-18" fill="none" stroke="#555" strokeWidth="4"><path d="M19 35V20H34M53 37V52H38" /></svg>
        </button>
      </Place>
    </div>
  );
}

/* ---------- order book ---------- */

function OrderBook() {
  return (
    <aside className="w-[324px] shrink-0 border-x-2 border-t-2 border-[#eeeeee] px-1">
      <button className="block h-[59px] w-full bg-[#f4f4f4] text-[30px] text-[#c93a3a]">全景500档</button>
      <table className="mt-3 w-full">
        <tbody>
          {sells.map(([n, price, vol, bar]) => (
            <tr key={n} className="h-[41px]">
              <th className="w-[111px] pl-[18px] text-left text-[36px] leading-[41px] font-normal text-[#666]">{`卖${n}`}</th>
              <td className={`${NUM} text-[40px] leading-[41px] font-medium text-[#159415]`}>{price}</td>
              <td className={`${NUM} relative pr-3 text-right text-[31px] leading-[41px] text-[#333]`}>
                <span className={`absolute top-1.5 right-0 h-7 bg-[#cdeacd] ${bar}`} />
                <span className="relative top-0.5">{vol}</span>
              </td>
            </tr>
          ))}
        </tbody>
      </table>
      <div className="mt-1.5 h-2.5 bg-[#009900]" />
      <table className="mt-2 w-full">
        <tbody>
          {buys.map((n) => (
            <tr key={n} className="h-[41px]">
              <th className="w-[111px] pl-[18px] text-left text-[36px] leading-[41px] font-normal text-[#666]">{`买${n}`}</th>
              <td className="pr-0 text-right font-['Roboto',sans-serif] text-[42px] leading-[41px] text-[#666]">−−</td>
              <td className="w-[115px] pr-3 text-right font-['Roboto',sans-serif] text-[42px] leading-[41px] text-[#333]">−−</td>
            </tr>
          ))}
        </tbody>
      </table>
      <button className="mt-[17px] flex h-[65px] w-full items-center justify-center gap-6 bg-[#f4f4f4] text-[40px] text-[#666]">
        明细
        <Triangle className="h-3 w-[17px]" />
      </button>
      <table className="mt-0.5 w-full">
        <tbody>
          {trades.map(([time, vol, tone], i) => (
            <tr key={i} className={`${NUM} h-16`}>
              <td className="pl-1 text-[42px] text-[#555]">{time}</td>
              <td className="w-[100px] text-[41px] font-medium text-[#159415]">12.29</td>
              <td className={`w-[100px] pr-0.5 text-right text-[34px] ${tone}`}>{vol}</td>
            </tr>
          ))}
        </tbody>
      </table>
    </aside>
  );
}

/* ---------- bottom bar ---------- */

function NavItem({ label, dot, children }) {
  return (
    <button className="relative flex flex-col items-center pt-[22px]">
      <svg viewBox="0 0 58 58" className="size-[58px]" fill="none" stroke="#d6d6d6" strokeWidth="3">{children}</svg>
      <span className="mt-0.5 text-[34px] leading-[50px]">{label}</span>
      {dot && <span className="absolute top-6 right-[52px] size-[18px] rounded-full bg-[#e83035]" />}
    </button>
  );
}

function BottomBar() {
  return (
    <nav className="fixed inset-x-0 bottom-0 h-[201px] bg-[#252525] text-[#d6d6d6]">
      <div className="grid grid-cols-[250px_1fr_1fr_1fr_1fr]">
        <button className="flex flex-col items-center pt-3 text-[34px]">
          <Triangle className="h-[15px] w-[26px] text-[#b0b0b0]" />
          <span className="mt-[13px] leading-[50px] text-[#8d8fa0]">房地产</span>
          <span className="mt-2.5 leading-[50px] text-[#2be52b]">-3.32%</span>
        </button>
        <NavItem label="下单">
          <path d="M11 3H46Q52 3 52 9V43L42 55H11Q6 55 6 49V9Q6 3 11 3Z" /><path d="M13 17H46M13 24H46M13 32H46M13 39H35" />
        </NavItem>
        <NavItem label="诊股">
          <rect x="2" y="12" width="54" height="41" rx="6" /><path d="M18 6H40M29 22V42M20 32H38" /><path d="M10 54H20M38 54H48" strokeWidth="5" />
        </NavItem>
        <NavItem label="加自选">
          <path d="M6 6H52V52H6ZM29 16V42M16 29H42" />
        </NavItem>
        <NavItem label="功能" dot>
          <circle cx="29" cy="29" r="24" /><path d="M18 22H40M18 36H40" />
        </NavItem>
      </div>
      <div className="absolute inset-x-0 bottom-[21px] mx-auto h-3 w-[360px] rounded-full bg-[#929292]" />
    </nav>
  );
}

export default function App() {
  return (
    <main className="min-h-screen overflow-x-hidden bg-white font-['Noto_Sans_CJK_SC',sans-serif] text-[#333]">
      <Header />
      <Quote />
      <News />
      <Tabs />
      <Legend />
      <div className="flex pr-3 pl-3">
        <div className="min-w-0 flex-1">
          <PriceChart />
          <div className={`${NUM} flex h-[49px] items-center justify-between pr-[70px] pl-3 text-[36px] text-[#999]`}>
            <span>09:15</span>
            <span className="ml-[-44px]">09:30</span>
            <span>11:30</span>
            <span>15:00</span>
          </div>
          <IndicatorCharts />
        </div>
        <OrderBook />
      </div>
      <BottomBar />
    </main>
  );
}
